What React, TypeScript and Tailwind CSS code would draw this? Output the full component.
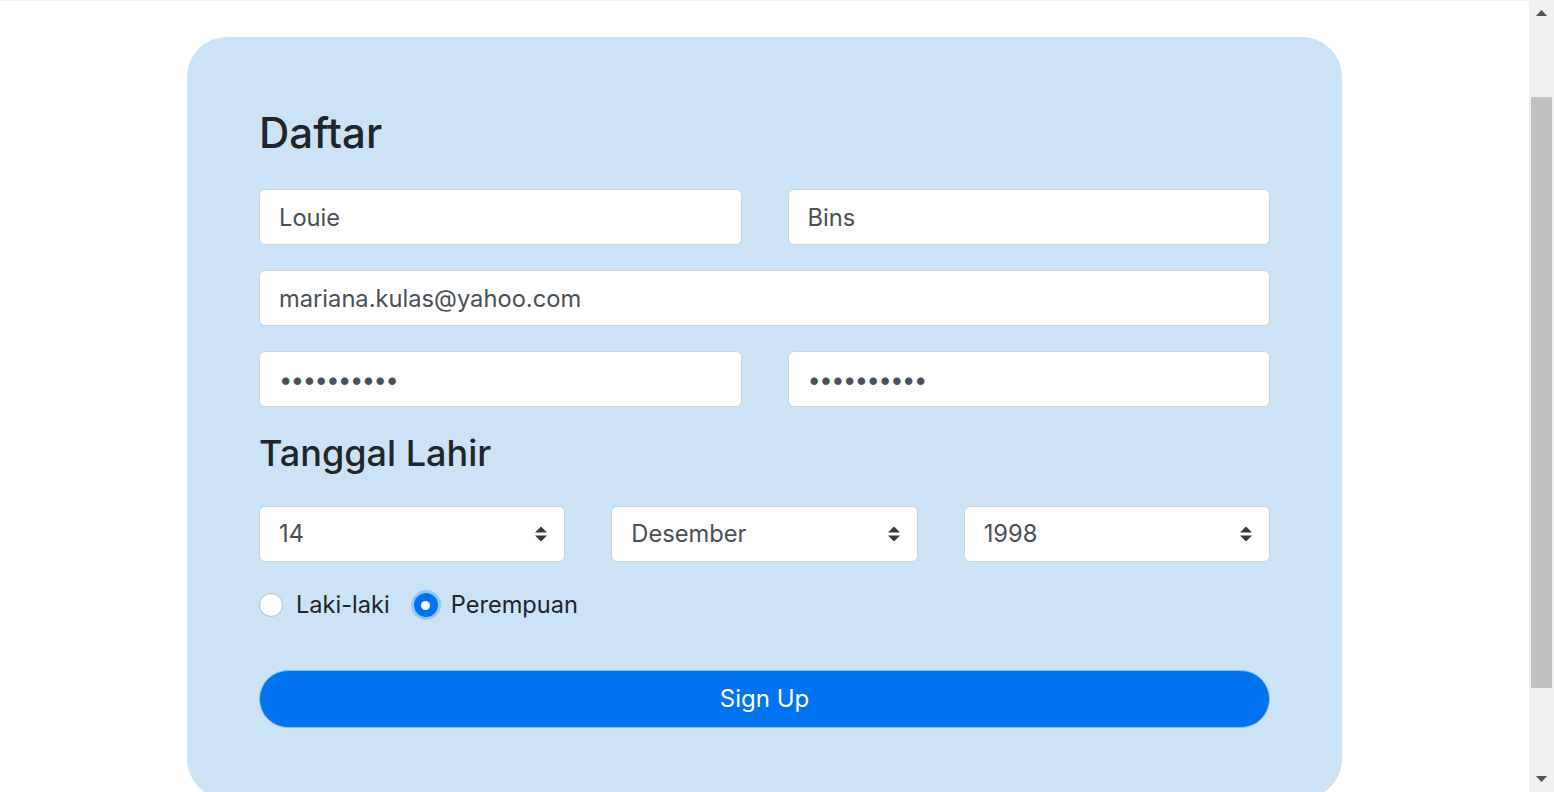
const months = [
  "Januari", "Februari", "Maret", "April", "Mei", "Juni",
  "Juli", "Agustus", "September", "Oktober", "November", "Desember",
]

function SelectBox({ value, options }: { value: string; options: string[] }) {
  return (
    <div className="relative">
      <select
        defaultValue={value}
        className="h-14 w-full appearance-none rounded-md border border-[#ced4da] bg-white pl-[19px] pr-10 text-[23.7px] text-[#495057] outline-none"
      >
        {options.map((o) => (
          <option key={o} value={o}>{o}</option>
        ))}
      </select>
      <svg
        className="pointer-events-none absolute right-[18px] top-1/2 h-[15px] w-[12px] -translate-y-1/2"
        viewBox="0 0 4 5"
      >
        <path d="M2 0L0 2h4zm0 5L0 3h4z" fill="#343a40" />
      </svg>
    </div>
  )
}

function Radio({ label, checked }: { label: string; checked?: boolean }) {
  return (
    <label className="flex items-center gap-[13px] text-[23.6px] leading-6 text-[#212529]">
      {checked ? (
        <span className="flex h-6 w-6 items-center justify-center rounded-full bg-[#0074f0] shadow-[0_0_0_3px_rgba(0,116,240,0.25)]">
          <span className="h-[9px] w-[9px] rounded-full bg-white" />
        </span>
      ) : (
        <span className="h-6 w-6 rounded-full border border-[#b8bcc0] bg-white" />
      )}
      {label}
    </label>
  )
}

// classic browser scrollbar, page scrolled a little down
function Scrollbar() {
  return (
    <aside className="flex h-screen w-[25px] shrink-0 flex-col bg-[#f0f0f0]">
      <div className="flex h-[26px] items-center justify-center">
        <svg width="11" height="6" viewBox="0 0 11 6"><path d="M5.5 0L11 6H0z" fill="#505050" /></svg>
      </div>
      <div className="flex-1">
        <div className="mx-[2px] mt-[71px] h-[591px] bg-[#c1c1c1]" />
      </div>
      <div className="flex h-[27px] items-center justify-center">
        <svg width="11" height="6" viewBox="0 0 11 6"><path d="M0 0h11L5.5 6z" fill="#505050" /></svg>
      </div>
    </aside>
  )
}

export default function App() {
  const input =
    "h-14 w-full rounded-md border border-[#ced4da] bg-white px-[19px] text-[23.7px] text-[#495057] outline-none"

  return (
    <div className="flex h-screen overflow-hidden bg-white font-['Inter','Noto_Sans',sans-serif]">
      <main className="min-w-0 flex-1">
        <div className="h-px bg-[#f2f2f2]" />
        <div className="pt-9 pb-[106px]">
          <div className="mx-auto w-[1155px] rounded-[40px] bg-[#cce3f6] px-[72px] pt-[71px] pb-[71px]">
            <h1 className="mb-[31px] text-[42px] font-medium leading-[50px] text-[#212529]">Daftar</h1>

            <div className="grid grid-cols-2 gap-x-[46px] gap-y-[25px]">
              <input className={input} defaultValue="Louie" />
              <input className={input} defaultValue="Bins" />
              <input className={`${input} col-span-2`} defaultValue="mariana.kulas@yahoo.com" />
              <input className={`${input} tracking-[-1.5px]`} type="password" defaultValue="rahasia123" />
              <input className={`${input} tracking-[-1.5px]`} type="password" defaultValue="rahasia123" />
            </div>

            <h2 className="mt-[24px] mb-[31px] text-[36px] font-medium leading-[44px] text-[#212529]">Tanggal Lahir</h2>

            <div className="grid grid-cols-3 gap-x-[46px]">
              <SelectBox value="14" options={Array.from({ length: 31 }, (_, i) => String(i + 1))} />
              <SelectBox value="Desember" options={months} />
              <SelectBox value="1998" options={Array.from({ length: 60 }, (_, i) => String(2010 - i))} />
            </div>

            <div className="mt-[31px] flex items-center gap-6">
              <Radio label="Laki-laki" />
              <Radio label="Perempuan" checked />
            </div>

            <button className="mt-[53px] h-[58px] w-full rounded-full border border-[#8fc0f5] bg-[#0074f0] text-[24px] text-white">
              Sign Up
            </button>
          </div>
        </div>
      </main>
      <Scrollbar />
    </div>
  )
}
